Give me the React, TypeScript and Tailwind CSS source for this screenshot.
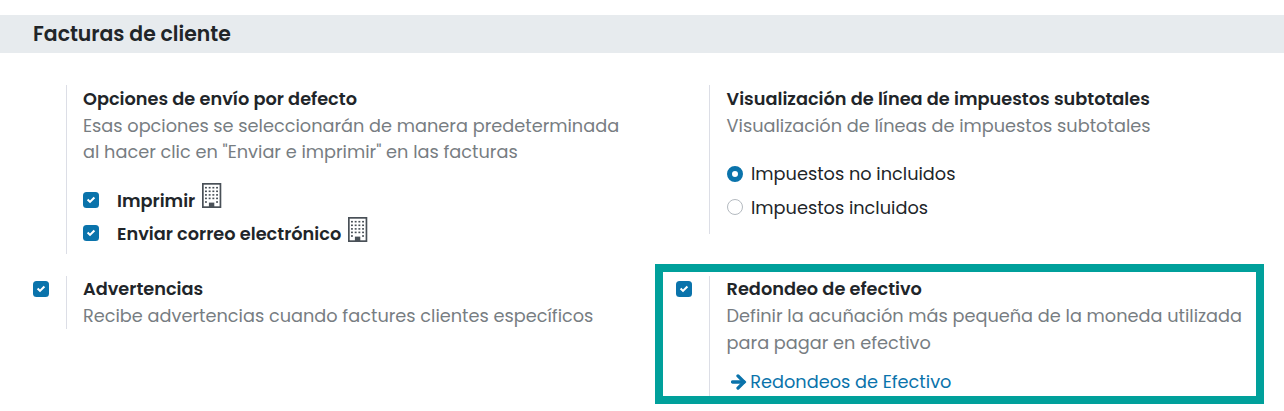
import React from "react";

function Check({ className = "" }: { className?: string }) {
  return (
    <span className={`block size-4 shrink-0 rounded-[3.5px] bg-[#0a73ab] ${className}`}>
      <svg viewBox="0 0 16 16" className="block size-4" fill="none" stroke="#fff" strokeWidth="2.1">
        <path d="M4.6 7.6 7 9.9 11.4 5.5" />
      </svg>
    </span>
  );
}

function Building({ className = "" }: { className?: string }) {
  return (
    <svg viewBox="0 0 20 25" className={`block h-[25px] w-5 shrink-0 ${className}`}>
      <rect x="0.85" y="0.85" width="17.6" height="23.3" fill="#fff" stroke="#495057" strokeWidth="1.7" />
      {[3.9, 7.5, 11.1, 14.6, 18.2].map((y) =>
        [3, 6.7, 10.4, 14.1].map((x) =>
          y > 18 && x > 6 && x < 12 ? null : (
            <rect key={`${x}-${y}`} x={x} y={y} width="1.9" height="1.6" fill="#495057" />
          ),
        ),
      )}
      <path d="M6.9 25v-5.4h5.4V25z" fill="#495057" />
    </svg>
  );
}

function Title({ children }: { children: React.ReactNode }) {
  return <span className="block whitespace-nowrap font-semibold text-[#212529]">{children}</span>;
}

function Note({ children }: { children: React.ReactNode }) {
  return <span className="block whitespace-nowrap text-[#777d82]">{children}</span>;
}

export default function App() {
  return (
    <div className="relative h-[411px] w-[1284px] overflow-hidden bg-white pt-[15px] font-['Poppins','Inter',sans-serif] text-[17.73px] leading-[26.6px] text-[#212529] [font-feature-settings:'cv11']">
      <h2 className="flex h-[38px] items-center bg-[#e7ebee] pl-[33px] text-[20.4px] font-semibold">
        Facturas de cliente
      </h2>

      <div className="grid grid-cols-[643px_641px] grid-rows-[191px_120px] items-start pt-8">
        <section className="ml-[66px] h-[169px] border-l border-[#dcdee6] pl-4 pt-px">
          <Title>Opciones de envío por defecto</Title>
          <Note>Esas opciones se seleccionarán de manera predeterminada</Note>
          <Note>al hacer clic en "Enviar e imprimir" en las facturas</Note>
          <div className="mt-[17px] flex h-[34px] items-start">
            <Check className="mt-[9px]" />
            <div className="ml-[18px] mt-[5px]">
              <Title>Imprimir</Title>
            </div>
            <Building className="ml-[7px]" />
          </div>
          <div className="flex h-[34px] items-start">
            <Check className="mt-2" />
            <div className="ml-[18px] mt-1">
              <Title>Enviar correo electrónico</Title>
            </div>
            <Building className="ml-[7px]" />
          </div>
        </section>

        <section className="ml-[66px] h-[149px] border-l border-[#dcdee6] pl-[16.6px] pt-px">
          <Title>Visualización de línea de impuestos subtotales</Title>
          <Note>Visualización de líneas de impuestos subtotales</Note>
          <label className="mt-[22px] flex h-[34px] items-start">
            <span className="mt-[4.5px] size-4 rounded-full border-[5px] border-[#0a73ab] bg-white" />
            <span className="ml-[8.4px]">Impuestos no incluidos</span>
          </label>
          <label className="flex h-[34px] items-start">
            <span className="mt-1 size-4 rounded-full border border-[#b4bac0] bg-white" />
            <span className="ml-[8.4px]">Impuestos incluidos</span>
          </label>
        </section>

        <section className="flex items-start">
          <Check className="ml-[33px] mt-[5px]" />
          <div className="ml-[17px] h-[53px] border-l border-[#dcdee6] pl-4">
            <Title>Advertencias</Title>
            <Note>Recibe advertencias cuando factures clientes específicos</Note>
          </div>
        </section>

        <section className="flex items-start">
          <Check className="ml-[33.4px] mt-[5px]" />
          <div className="ml-[16.6px] h-[120px] border-l border-[#dcdee6] pl-[16.6px]">
            <Title>Redondeo de efectivo</Title>
            <Note>Definir la acuñación más pequeña de la moneda utilizada</Note>
            <div className="pt-[0.6px]">
              <Note>para pagar en efectivo</Note>
            </div>
            <a className="mt-[12.4px] flex items-start text-[#0a73ab]">
              <svg
                viewBox="0 0 16 16"
                className="ml-[4.4px] mt-[5px] size-4 shrink-0"
                fill="none"
                stroke="currentColor"
                strokeWidth="3.3"
              >
                <path d="M1.5 8H13" strokeLinecap="round" />
                <path d="M7 1.9 13.1 8 7 14.1" strokeLinecap="round" />
              </svg>
              <span className="ml-[3.3px] whitespace-nowrap">Redondeos de Efectivo</span>
            </a>
          </div>
        </section>
      </div>

      <div className="pointer-events-none absolute left-[655px] top-[264px] h-[140px] w-[609px] border-8 border-[#00a09b]" />
    </div>
  );
}
